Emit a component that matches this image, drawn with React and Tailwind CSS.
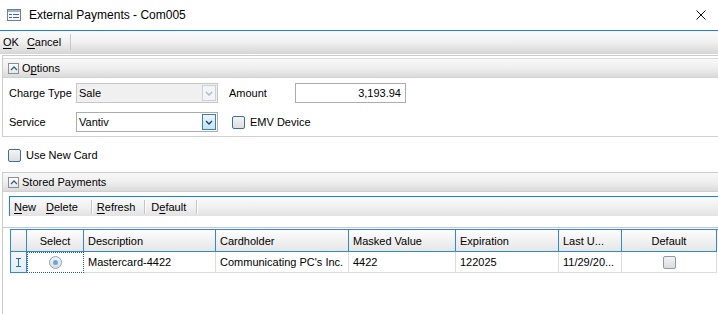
import React from 'react'

// Small WinForms-style dialog: External Payments.
const COLS = [
  { label: 'Select', w: 57, center: true },
  { label: 'Description', w: 132 },
  { label: 'Cardholder', w: 133 },
  { label: 'Masked Value', w: 107 },
  { label: 'Expiration', w: 103 },
  { label: 'Last U...', w: 63 },
  { label: 'Default', w: 95, center: true },
]

function U({ children }) {
  return <span className="underline underline-offset-[2px]">{children}</span>
}

function Chevron({ up, color = '#2b5d8c' }) {
  return (
    <svg width="8" height="5" viewBox="0 0 8 5">
      <path d={up ? 'M1 4 L4 1 L7 4' : 'M1 1 L4 4 L7 1'} fill="none" stroke={color} strokeWidth="1.3" />
    </svg>
  )
}

function PanelHeader({ children }) {
  return (
    <div className="h-[19px] flex items-center bg-linear-to-b from-[#f8f8f8] via-[#efefef] to-[#dadada] border-b border-[#d0d0d0]">
      <div className="ml-[5px] w-[11px] h-[11px] border border-[#8e8e8e] bg-linear-to-b from-white to-[#e6e6e6] flex items-center justify-center">
        <Chevron up color="#33648f" />
      </div>
      <span className="ml-[3px] pt-px">{children}</span>
    </div>
  )
}

function Check() {
  return <div className="w-[13px] h-[13px] border border-[#3f6f9f] rounded-[2px] bg-linear-to-b from-[#f4f4f4] to-[#dedede]" />
}

function Sep() {
  return <div className="w-[2px] h-[14px] bg-[#c4c4c4] border-r border-white" />
}

export default function App() {
  return (
    <div className="w-[718px] h-[314px] overflow-hidden bg-white text-[11px] text-black font-['Liberation_Sans',Arial,sans-serif] leading-none">
      {/* title bar */}
      <div className="h-[30px] flex items-center">
        <svg className="ml-[7px]" width="14" height="12" viewBox="0 0 14 12">
          <rect x="0.5" y="0.5" width="13" height="11" fill="#f3f5f8" stroke="#6c7f95" />
          <rect x="1" y="1" width="12" height="2" fill="#9fb3c8" />
          <rect x="2" y="5" width="3" height="1" fill="#4c6784" />
          <rect x="6" y="5" width="6" height="1" fill="#4c6784" />
          <rect x="2" y="8" width="3" height="1" fill="#4c6784" />
          <rect x="6" y="8" width="6" height="1" fill="#4c6784" />
        </svg>
        <span className="ml-[8px] text-[12px]">External Payments - Com005</span>
        <svg className="ml-auto mr-[12px]" width="10" height="10" viewBox="0 0 10 10">
          <path d="M0.5 0.5 L9.5 9.5 M9.5 0.5 L0.5 9.5" stroke="#111" strokeWidth="1" />
        </svg>
      </div>
      <div className="h-px bg-[#1a85d6]" />

      {/* dialog toolbar */}
      <div className="h-[23px] flex items-center bg-linear-to-b from-[#fbfbfb] via-[#f0f0f0] to-[#d8d8d8] border-b border-[#d6d6d6]">
        <span className="ml-[3px]"><U>O</U>K</span>
        <span className="ml-[8px]"><U>C</U>ancel</span>
        <div className="ml-[9px] w-px h-[16px] bg-[#c8c8c8]" />
      </div>

      {/* Options panel */}
      <div className="mt-[1px] ml-[2px] border-t border-l border-[#cccccc] pt-[2px]">
        <div className="border-t border-[#dcdcdc]">
          <PanelHeader>O<U>p</U>tions</PanelHeader>
        </div>
        <div className="h-[59px] border-b border-[#d0d0d0] pt-[5px] flex flex-col gap-[9px]">
          <div className="h-[20px] flex items-center">
            <span className="ml-[6px] w-[67px]">Charge Type</span>
            <div className="w-[142px] h-[20px] border border-[#c6c6c6] bg-[#f0f0f0] flex items-center">
              <span className="ml-[2px]">Sale</span>
              <div className="ml-auto mr-[1px] w-[14px] h-[16px] border border-[#c5d3e0] bg-[#f2f4f6] flex items-center justify-center">
                <Chevron color="#a9b8c8" />
              </div>
            </div>
            <span className="ml-[11px] w-[66px]">Amount</span>
            <div className="w-[111px] h-[20px] border border-[#acacac] flex items-center justify-end pr-[4px]">3,193.94</div>
          </div>
          <div className="h-[20px] flex items-center">
            <span className="ml-[6px] w-[67px]">Service</span>
            <div className="w-[142px] h-[20px] border border-[#acacac] bg-white flex items-center">
              <span className="ml-[2px]">Vantiv</span>
              <div className="ml-auto mr-[1px] w-[14px] h-[16px] border border-[#3c7fb1] bg-linear-to-b from-[#eaf6fd] to-[#c4e5f6] flex items-center justify-center">
                <Chevron color="#1c3f66" />
              </div>
            </div>
            <div className="ml-[14px]"><Check /></div>
            <span className="ml-[5px]">EMV Device</span>
          </div>
        </div>
      </div>

      <div className="h-[35px] pt-[2px] flex items-center">
        <div className="ml-[8px]"><Check /></div>
        <span className="ml-[5px]">Use New Card</span>
      </div>

      {/* Stored Payments panel */}
      <div className="ml-[2px] border-t border-l border-[#cccccc]">
        <PanelHeader>Stored Payments</PanelHeader>
        <div className="pt-[4px] pl-[6px]">
          <div className="h-[20px] flex items-center border-t border-l border-[#1a85d6] bg-linear-to-b from-[#fafafa] via-[#f1f1f1] to-[#e2e2e2]">
            <span className="ml-[4px] pt-px"><U>N</U>ew</span>
            <span className="ml-[10px] pt-px"><U>D</U>elete</span>
            <div className="ml-[13px]"><Sep /></div>
            <span className="ml-[4px] pt-px"><U>R</U>efresh</span>
            <div className="ml-[9px]"><Sep /></div>
            <span className="ml-[5px] pt-px">D<U>e</U>fault</span>
            <div className="ml-[10px]"><Sep /></div>
          </div>
        </div>
        <div className="mt-[11px] -ml-px border-t border-l border-[#c8c8c8] h-[100px] pt-[1px] pl-[7px]">
          <div className="flex h-[23px] border-t border-[#2f8ad6]">
            <div className="w-[17px] border-x border-b border-[#2f8ad6] bg-linear-to-b from-[#fdfdfd] to-[#e6e6e6]" />
            {COLS.map(c => (
              <div key={c.label} style={{ width: c.w }}
                className={`shrink-0 pt-px border-r border-b border-[#2f8ad6] bg-linear-to-b from-[#fdfdfd] to-[#e6e6e6] flex items-center ${c.center ? 'justify-center' : 'pl-[4px]'}`}>
                {c.label}
              </div>
            ))}
          </div>
          <div className="flex h-[21px]">
            <div className="w-[17px] border-x border-b border-[#2f8ad6] bg-linear-to-b from-[#f4f8fc] to-[#e3ecf5] flex items-center justify-center">
              <svg width="5" height="9" viewBox="0 0 5 9">
                <path d="M0 0.5 H5 M2.5 0.5 V8.5 M0 8.5 H5" stroke="#2f6fb0" strokeWidth="1" fill="none" />
              </svg>
            </div>
            <div className="w-[57px] shrink-0 border border-dotted border-[#1f5fa8] flex items-center justify-center">
              <div className="w-[13px] h-[13px] rounded-full border border-[#8da4bd] bg-linear-to-b from-[#f3f3f3] to-[#dcdcdc] flex items-center justify-center">
                <div className="w-[5px] h-[5px] rounded-full bg-[#6aa8dc]" />
              </div>
            </div>
            {['Mastercard-4422', "Communicating PC's Inc.", '4422', '122025', '11/29/20...'].map((v, i) => (
              <div key={i} style={{ width: COLS[i + 1].w }} className="shrink-0 pt-px border-r border-b border-[#dcdcdc] flex items-center pl-[4px]">
                {v}
              </div>
            ))}
            <div style={{ width: COLS[6].w }} className="shrink-0 border-r border-b border-[#dcdcdc] flex items-center justify-center">
              <div className="w-[13px] h-[13px] border border-[#8c9aa8] rounded-[2px] bg-linear-to-b from-[#f3f3f3] to-[#dcdcdc]" />
            </div>
          </div>
        </div>
      </div>
    </div>
  )
}
